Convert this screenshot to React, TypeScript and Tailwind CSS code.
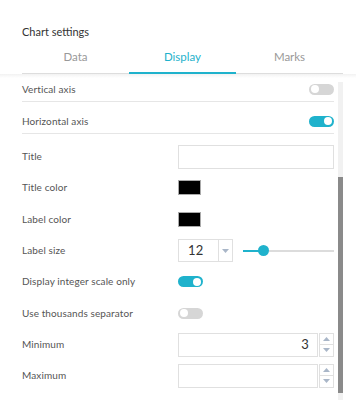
import type { ReactNode } from 'react';

const teal = 'bg-[#1fb2cc]';

function Toggle({ on }: { on: boolean }) {
  return (
    <div
      className={`relative h-[11px] w-[25px] rounded-full ${on ? teal : 'bg-[#d6d6d6]'}`}
    >
      <div
        className={`absolute top-[1.5px] h-[8px] w-[8px] rounded-full bg-white ${on ? 'right-[2px]' : 'left-[2px]'}`}
      />
    </div>
  );
}

function Swatch() {
  return <div className="h-[15px] w-[23px] border border-[#aaa] bg-black" />;
}

function Arrow({ up }: { up?: boolean }) {
  return (
    <svg width="7" height="4" viewBox="0 0 7 4">
      <path d={up ? 'M0 4 L3.5 0 L7 4 Z' : 'M0 0 L3.5 4 L7 0 Z'} fill="#a9b6c8" />
    </svg>
  );
}

function NumberInput({ value }: { value?: string }) {
  return (
    <div className="flex h-[24px] items-stretch gap-[1px]">
      <div className="flex w-[140px] items-center justify-end border border-[#e0e0e0] pr-[8px] text-[13px] text-[#333]">
        {value}
      </div>
      <div className="flex w-[15px] flex-col border border-[#e0e0e0]">
        <div className="flex flex-1 items-center justify-center border-b border-[#e0e0e0]">
          <Arrow up />
        </div>
        <div className="flex flex-1 items-center justify-center">
          <Arrow />
        </div>
      </div>
    </div>
  );
}

function Row({ label, children, h = 'h-[31px]' }: { label: string; children: ReactNode; h?: string }) {
  return (
    <div className={`flex ${h} items-center`}>
      <div className="w-[156px] shrink-0">{label}</div>
      <div className="flex flex-1 items-center">{children}</div>
    </div>
  );
}

export default function App() {
  return (
    <div
      className="h-[400px] w-[356px] overflow-hidden bg-white text-[#333]"
      style={{ fontFamily: 'Lato, "Open Sans", sans-serif' }}
    >
      <div className="pl-[22px] pr-[13px] pt-[24px]">
        <div className="h-[16px] text-[11px] leading-[16px]">Chart settings</div>
        <div className="mt-[8px] flex border-b border-[#ddd] text-[11.5px] leading-[18px]">
          <div className="flex-1 pb-[7px] text-center text-[#999]">Data</div>
          <div className="-mb-[1px] flex-1 border-b-2 border-[#1fb2cc] pb-[6px] text-center text-[#1fb2cc]">
            Display
          </div>
          <div className="flex-1 pb-[7px] text-center text-[#999]">Marks</div>
        </div>
      </div>

      <div className="relative flex h-[326px] pl-[22px] pr-[13px] text-[10px] tracking-[0.1px] text-[#555]">
        <div className="pointer-events-none absolute inset-x-0 top-0 h-[4px] bg-gradient-to-b from-[#f2f2f2] to-white" />
        <div className="flex-1 pr-[4px] pt-[3px]">
          <div className="flex h-[25px] items-center justify-between border-b border-[#e6e6e6]">
            <span>Vertical axis</span>
            <Toggle on={false} />
          </div>
          <div className="flex h-[32px] items-center justify-between border-b border-[#e6e6e6] pt-[7px]">
            <span>Horizontal axis</span>
            <Toggle on />
          </div>
          <div className="mt-[7px]">
            <Row label="Title">
              <div className="h-[24px] w-[156px] border border-[#e0e0e0]" />
            </Row>
            <Row label="Title color">
              <Swatch />
            </Row>
            <Row label="Label color" h="h-[32px]">
              <Swatch />
            </Row>
            <Row label="Label size">
              <div className="flex h-[23px] w-[55px] border border-[#e0e0e0]">
                <div className="flex flex-1 items-center pl-[9px] text-[13px] text-[#333]">12</div>
                <div className="flex w-[14px] items-center justify-center border-l border-[#e0e0e0]">
                  <Arrow />
                </div>
              </div>
              <div className="relative ml-[10px] flex h-[12px] flex-1 items-center">
                <div className="h-[2px] w-full bg-[#dcdcdc]" />
                <div className={`absolute left-0 h-[2px] w-[20px] ${teal}`} />
                <div className={`absolute left-[15px] h-[11px] w-[11px] rounded-full ${teal}`} />
              </div>
            </Row>
            <Row label="Display integer scale only">
              <Toggle on />
            </Row>
            <Row label="Use thousands separator" h="h-[32px]">
              <Toggle on={false} />
            </Row>
            <Row label="Minimum">
              <NumberInput value="3" />
            </Row>
            <Row label="Maximum">
              <NumberInput />
            </Row>
          </div>
        </div>
        <div className="relative mt-[8px] w-[5px] bg-[#f1f1f1]">
          <div className="absolute left-0 top-[95px] h-[216px] w-[5px] bg-[#8a8a8a]" />
        </div>
      </div>
    </div>
  );
}
